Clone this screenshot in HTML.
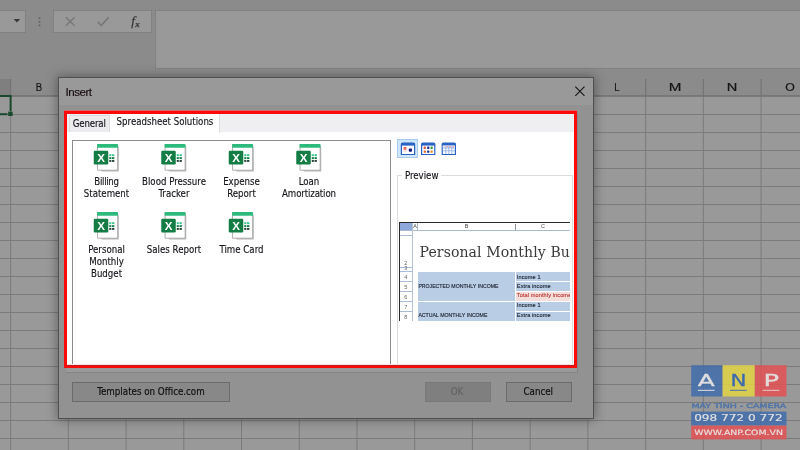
<!DOCTYPE html>
<html lang="en"><head><meta charset="utf-8"><title>Insert</title>
<style>
*{box-sizing:border-box;margin:0;padding:0}
html,body{width:800px;height:450px;overflow:hidden;background:#8b8b8b}
body{position:relative;font-family:'DejaVu Sans Condensed','Liberation Sans',sans-serif;font-size:9.6px;color:#1c1c1c}
#stage{position:absolute;left:-20px;top:-20px;width:840px;height:490px;background:#8b8b8b;filter:blur(0.42px)}
#app{position:absolute;left:20px;top:20px;width:800px;height:450px}
.a{position:absolute}
.t{position:absolute;white-space:nowrap;line-height:12px;text-align:center}
.box{position:absolute;background:#999;border:1px solid #818181}
.hl{position:absolute;font-family:'Liberation Sans','DejaVu Sans',sans-serif;font-size:11.7px;line-height:14px;width:30px;text-align:center;color:#161616;-webkit-text-stroke:.2px #161616;top:80px}
.lbl{position:absolute;width:76px;text-align:center;line-height:12px;font-size:9.6px;color:#16161c;-webkit-text-stroke:.14px #16161c}
.btn{position:absolute;height:20px;top:382px;background:#888;border:1px solid #6a6a6a;text-align:center;line-height:18px;font-size:9.7px;color:#111;-webkit-text-stroke:.18px #111}
svg{position:absolute;overflow:visible}
</style></head>
<body>
<div id="stage"><div id="app">
<div class="box" style="left:-1px;top:10px;width:27px;height:23px"></div>
<div class="box" style="left:53px;top:10px;width:99px;height:23px"></div>
<div class="box" style="left:155px;top:10px;width:647px;height:59px;border-bottom-color:#808080"></div>
<svg class="a" style="left:0;top:0" width="160" height="40" viewBox="0 0 160 40"><path d="M13.6 19h6.6l-3.3 3.6z" fill="#383838"/><g fill="#606060"><rect x="38.7" y="17.2" width="1.6" height="1.6"/><rect x="38.7" y="20.9" width="1.6" height="1.6"/><rect x="38.7" y="24.6" width="1.6" height="1.6"/></g><path d="M65.8 17.2l8.8 8.6M74.6 17.2l-8.8 8.6" stroke="#777" stroke-width="1.35" fill="none"/><path d="M97.8 21.9l3.5 3.7 7.3-8.3" stroke="#777" stroke-width="1.6" fill="none"/></svg>
<div class="t" style="left:131.2px;top:13px;font-family:'Liberation Serif','DejaVu Serif',serif;font-style:italic;font-size:13.5px;line-height:16px;color:#383838;-webkit-text-stroke:.25px #383838;text-align:left">f<span style="font-size:9px;font-weight:bold;position:relative;top:1.6px;margin-left:.2px">x</span></div>
<div class="a" style="left:0;top:96px;width:800px;height:354px;background:#999"></div>
<svg class="a" style="left:0;top:0" width="800" height="450" viewBox="0 0 800 450"><g stroke="#777" stroke-width=".9"><line x1="10.60" y1="96" x2="10.60" y2="450"/><line x1="68.33" y1="96" x2="68.33" y2="450"/><line x1="126.06" y1="96" x2="126.06" y2="450"/><line x1="183.79" y1="96" x2="183.79" y2="450"/><line x1="241.52" y1="96" x2="241.52" y2="450"/><line x1="299.25" y1="96" x2="299.25" y2="450"/><line x1="356.98" y1="96" x2="356.98" y2="450"/><line x1="414.71" y1="96" x2="414.71" y2="450"/><line x1="472.44" y1="96" x2="472.44" y2="450"/><line x1="530.17" y1="96" x2="530.17" y2="450"/><line x1="587.90" y1="96" x2="587.90" y2="450"/><line x1="645.63" y1="96" x2="645.63" y2="450"/><line x1="703.36" y1="96" x2="703.36" y2="450"/><line x1="761.09" y1="96" x2="761.09" y2="450"/><line x1="0" y1="114.5" x2="800" y2="114.5"/><line x1="0" y1="132.5" x2="800" y2="132.5"/><line x1="0" y1="150.5" x2="800" y2="150.5"/><line x1="0" y1="168.5" x2="800" y2="168.5"/><line x1="0" y1="186.5" x2="800" y2="186.5"/><line x1="0" y1="204.5" x2="800" y2="204.5"/><line x1="0" y1="222.5" x2="800" y2="222.5"/><line x1="0" y1="240.5" x2="800" y2="240.5"/><line x1="0" y1="258.5" x2="800" y2="258.5"/><line x1="0" y1="276.5" x2="800" y2="276.5"/><line x1="0" y1="294.5" x2="800" y2="294.5"/><line x1="0" y1="312.5" x2="800" y2="312.5"/><line x1="0" y1="330.5" x2="800" y2="330.5"/><line x1="0" y1="348.5" x2="800" y2="348.5"/><line x1="0" y1="366.5" x2="800" y2="366.5"/><line x1="0" y1="384.5" x2="800" y2="384.5"/><line x1="0" y1="402.5" x2="800" y2="402.5"/><line x1="0" y1="420.5" x2="800" y2="420.5"/><line x1="0" y1="438.5" x2="800" y2="438.5"/></g><rect x="0" y="79" width="10.6" height="17" fill="#7f7f7f"/><g stroke="#747474" stroke-width="1.2"><line x1="10.60" y1="79" x2="10.60" y2="96"/><line x1="68.33" y1="79" x2="68.33" y2="96"/><line x1="126.06" y1="79" x2="126.06" y2="96"/><line x1="183.79" y1="79" x2="183.79" y2="96"/><line x1="241.52" y1="79" x2="241.52" y2="96"/><line x1="299.25" y1="79" x2="299.25" y2="96"/><line x1="356.98" y1="79" x2="356.98" y2="96"/><line x1="414.71" y1="79" x2="414.71" y2="96"/><line x1="472.44" y1="79" x2="472.44" y2="96"/><line x1="530.17" y1="79" x2="530.17" y2="96"/><line x1="587.90" y1="79" x2="587.90" y2="96"/><line x1="645.63" y1="79" x2="645.63" y2="96"/><line x1="703.36" y1="79" x2="703.36" y2="96"/><line x1="761.09" y1="79" x2="761.09" y2="96"/></g><line x1="0" y1="96" x2="800" y2="96" stroke="#707070" stroke-width="1.6"/><g fill="#17492d"><rect x="0" y="95" width="11.6" height="2"/><rect x="9.6" y="96" width="2" height="15"/><rect x="0" y="113.2" width="7.4" height="2"/><rect x="8.2" y="111.6" width="4.4" height="4.4"/></g></svg>
<div class="hl" style="left:24.3px;transform:scaleX(0.82)">B</div>
<div class="hl" style="left:601.8px;transform:scaleX(0.82)">L</div>
<div class="hl" style="left:659.8px;transform:scaleX(1.3)">M</div>
<div class="hl" style="left:717.4px;transform:scaleX(1.25)">N</div>
<div class="hl" style="left:775.2px;transform:scaleX(1.05)">O</div>
<svg class="a" style="left:0;top:0" width="800" height="450" viewBox="0 0 800 450" font-family="DejaVu Sans,Liberation Sans,sans-serif"><g opacity=".84"><rect x="691.2" y="365.2" width="31.4" height="31.3" fill="#3f6cab"/><rect x="722.6" y="365.2" width="32.2" height="31.3" fill="#e4d644"/><rect x="754.8" y="365.2" width="31.7" height="31.3" fill="#e55153"/><rect x="691.2" y="411.6" width="95.3" height="14" fill="#3f6cab"/><rect x="691.2" y="425.6" width="95.3" height="13.8" fill="#e55153"/></g><g stroke-width=".3" stroke-linejoin="round"><text x="706.2" y="386.2" font-size="15.8" text-anchor="middle" fill="#dedede" stroke="#dedede" textLength="17" lengthAdjust="spacingAndGlyphs">A</text><text x="738.4" y="386.2" font-size="15.8" text-anchor="middle" fill="#3c6ab0" stroke="#3c6ab0" textLength="16" lengthAdjust="spacingAndGlyphs">N</text><text x="771.2" y="386.2" font-size="15.8" text-anchor="middle" fill="#e4dcdc" stroke="#e4dcdc" textLength="15.6" lengthAdjust="spacingAndGlyphs">P</text></g><rect x="697.8" y="389.8" width="16.8" height="1.1" fill="#d4d8de"/><rect x="730" y="389.8" width="16.8" height="1.1" fill="#5877a4"/><rect x="762.6" y="389.8" width="16.8" height="1.1" fill="#e6c0c0"/><text x="691.4" y="408" font-size="6.3" fill="#4e74a8" stroke="#4e74a8" stroke-width=".35" textLength="94.8" lengthAdjust="spacingAndGlyphs">MÁY TÍNH - CAMERA</text><g stroke-width=".15"><text x="694.2" y="421.4" font-size="8.1" fill="#e0e0e0" stroke="#e0e0e0" textLength="88.4" lengthAdjust="spacingAndGlyphs">098 772 0 772</text><text x="694.2" y="434.8" font-size="7.3" fill="#eadede" stroke="#eadede" textLength="88.8" lengthAdjust="spacingAndGlyphs">WWW.ANP.COM.VN</text></g></svg>
<div class="a" style="left:58px;top:77px;width:536px;height:342px;background:#929292;border:1px solid #505050;box-shadow:0 0 10px 1px rgba(0,0,0,.34)"></div>
<div class="a" style="left:59px;top:78px;width:534px;height:27px;background:#999"></div>
<div class="t" style="left:65.6px;top:84px;font-family:'Liberation Sans','DejaVu Sans',sans-serif;font-size:11.6px;line-height:15px;letter-spacing:-.5px;color:#170e13;-webkit-text-stroke:.15px #170e13;text-align:left">Insert</div>
<svg class="a" style="left:574px;top:85px" width="12" height="12" viewBox="0 0 12 12"><path d="M1.3 1.6l9.2 9.2M10.5 1.6L1.3 10.8" stroke="#151515" stroke-width="1.1" fill="none"/></svg>
<div class="a" style="left:66px;top:114px;width:512.4px;height:259.4px;background:#858585"></div>
<div class="a" style="left:66px;top:114px;width:511px;height:258px;background:#9a9a9a"></div>
<div class="a" style="left:64px;top:110px;width:513.4px;height:258px;background:#fb0a0a"></div>
<div class="a" style="left:64px;top:110px;width:513.4px;height:1px;background:#d86a6a"></div>
<div class="a" id="in" style="left:67px;top:114px;width:507px;height:251px;background:#fff;overflow:hidden">
<div class="a" style="left:0;top:0;width:507px;height:17.6px;background:#efeff1"></div>
<div class="a" style="left:1.5999999999999943px;top:1.2000000000000028px;width:41.80000000000001px;height:16.4px;background:#ececee;border:1px solid #dcdce0;border-bottom:none"></div>
<div class="a" style="left:43.400000000000006px;top:0;width:110.0px;height:19px;background:#fff;border-right:1px solid #dddde0"></div>
<div class="t" style="left:-4px;top:3.5999999999999943px;width:52.5px;letter-spacing:-.15px;color:#16161c;-webkit-text-stroke:.14px #16161c">General</div>
<div class="t" style="left:40px;top:2px;width:116px;color:#16161c;-webkit-text-stroke:.14px #16161c">Spreadsheet Solutions</div>
<div class="a" style="left:5.400000000000006px;top:25.5px;width:318.20000000000005px;height:240px;background:#fff;border:1px solid #8c8c8c"></div>
<svg class="a" style="left:0;top:0" width="507" height="251" viewBox="67 114 507 251" font-family="Liberation Sans,DejaVu Sans,sans-serif" font-weight="bold"><g transform="translate(93.75,144.00)"><path d="M6 3.2h19v24.2h-16.8l-2.2-2z" fill="#b4b4b4"/><path d="M3.8 0.6h19.1a1 1 0 0 1 1 1v23.6a1 1 0 0 1 -1 1h-19.1z" fill="#fff" stroke="#a6a6a6" stroke-width=".9"/><path d="M3.4 0h19.9a1 1 0 0 1 1 1v2.7h-20.9z" fill="#2cbb7c"/><rect x="15.5" y="10.2" width="2.1" height="1.9" fill="#37c68c"/><rect x="18.3" y="10.2" width="2.3" height="1.9" fill="#37c68c"/><rect x="15.5" y="13.1" width="2.1" height="2" fill="#17814b"/><rect x="18.3" y="13.1" width="2.3" height="2" fill="#17814b"/><rect x="15.5" y="16.1" width="2.1" height="1.7" fill="#0f2f20"/><rect x="18.3" y="16.1" width="2.3" height="1.7" fill="#0f2f20"/><rect x="0" y="6.8" width="14.5" height="13.7" rx="1.2" fill="#137d45"/><text x="7.4" y="18.0" font-size="11.6" text-anchor="middle" fill="#fff">X</text></g><g transform="translate(161.25,144.00)"><path d="M6 3.2h19v24.2h-16.8l-2.2-2z" fill="#b4b4b4"/><path d="M3.8 0.6h19.1a1 1 0 0 1 1 1v23.6a1 1 0 0 1 -1 1h-19.1z" fill="#fff" stroke="#a6a6a6" stroke-width=".9"/><path d="M3.4 0h19.9a1 1 0 0 1 1 1v2.7h-20.9z" fill="#2cbb7c"/><rect x="15.5" y="10.2" width="2.1" height="1.9" fill="#37c68c"/><rect x="18.3" y="10.2" width="2.3" height="1.9" fill="#37c68c"/><rect x="15.5" y="13.1" width="2.1" height="2" fill="#17814b"/><rect x="18.3" y="13.1" width="2.3" height="2" fill="#17814b"/><rect x="15.5" y="16.1" width="2.1" height="1.7" fill="#0f2f20"/><rect x="18.3" y="16.1" width="2.3" height="1.7" fill="#0f2f20"/><rect x="0" y="6.8" width="14.5" height="13.7" rx="1.2" fill="#137d45"/><text x="7.4" y="18.0" font-size="11.6" text-anchor="middle" fill="#fff">X</text></g><g transform="translate(228.75,144.00)"><path d="M6 3.2h19v24.2h-16.8l-2.2-2z" fill="#b4b4b4"/><path d="M3.8 0.6h19.1a1 1 0 0 1 1 1v23.6a1 1 0 0 1 -1 1h-19.1z" fill="#fff" stroke="#a6a6a6" stroke-width=".9"/><path d="M3.4 0h19.9a1 1 0 0 1 1 1v2.7h-20.9z" fill="#2cbb7c"/><rect x="15.5" y="10.2" width="2.1" height="1.9" fill="#37c68c"/><rect x="18.3" y="10.2" width="2.3" height="1.9" fill="#37c68c"/><rect x="15.5" y="13.1" width="2.1" height="2" fill="#17814b"/><rect x="18.3" y="13.1" width="2.3" height="2" fill="#17814b"/><rect x="15.5" y="16.1" width="2.1" height="1.7" fill="#0f2f20"/><rect x="18.3" y="16.1" width="2.3" height="1.7" fill="#0f2f20"/><rect x="0" y="6.8" width="14.5" height="13.7" rx="1.2" fill="#137d45"/><text x="7.4" y="18.0" font-size="11.6" text-anchor="middle" fill="#fff">X</text></g><g transform="translate(296.25,144.00)"><path d="M6 3.2h19v24.2h-16.8l-2.2-2z" fill="#b4b4b4"/><path d="M3.8 0.6h19.1a1 1 0 0 1 1 1v23.6a1 1 0 0 1 -1 1h-19.1z" fill="#fff" stroke="#a6a6a6" stroke-width=".9"/><path d="M3.4 0h19.9a1 1 0 0 1 1 1v2.7h-20.9z" fill="#2cbb7c"/><rect x="15.5" y="10.2" width="2.1" height="1.9" fill="#37c68c"/><rect x="18.3" y="10.2" width="2.3" height="1.9" fill="#37c68c"/><rect x="15.5" y="13.1" width="2.1" height="2" fill="#17814b"/><rect x="18.3" y="13.1" width="2.3" height="2" fill="#17814b"/><rect x="15.5" y="16.1" width="2.1" height="1.7" fill="#0f2f20"/><rect x="18.3" y="16.1" width="2.3" height="1.7" fill="#0f2f20"/><rect x="0" y="6.8" width="14.5" height="13.7" rx="1.2" fill="#137d45"/><text x="7.4" y="18.0" font-size="11.6" text-anchor="middle" fill="#fff">X</text></g><g transform="translate(93.75,212.00)"><path d="M6 3.2h19v24.2h-16.8l-2.2-2z" fill="#b4b4b4"/><path d="M3.8 0.6h19.1a1 1 0 0 1 1 1v23.6a1 1 0 0 1 -1 1h-19.1z" fill="#fff" stroke="#a6a6a6" stroke-width=".9"/><path d="M3.4 0h19.9a1 1 0 0 1 1 1v2.7h-20.9z" fill="#2cbb7c"/><rect x="15.5" y="10.2" width="2.1" height="1.9" fill="#37c68c"/><rect x="18.3" y="10.2" width="2.3" height="1.9" fill="#37c68c"/><rect x="15.5" y="13.1" width="2.1" height="2" fill="#17814b"/><rect x="18.3" y="13.1" width="2.3" height="2" fill="#17814b"/><rect x="15.5" y="16.1" width="2.1" height="1.7" fill="#0f2f20"/><rect x="18.3" y="16.1" width="2.3" height="1.7" fill="#0f2f20"/><rect x="0" y="6.8" width="14.5" height="13.7" rx="1.2" fill="#137d45"/><text x="7.4" y="18.0" font-size="11.6" text-anchor="middle" fill="#fff">X</text></g><g transform="translate(161.25,212.00)"><path d="M6 3.2h19v24.2h-16.8l-2.2-2z" fill="#b4b4b4"/><path d="M3.8 0.6h19.1a1 1 0 0 1 1 1v23.6a1 1 0 0 1 -1 1h-19.1z" fill="#fff" stroke="#a6a6a6" stroke-width=".9"/><path d="M3.4 0h19.9a1 1 0 0 1 1 1v2.7h-20.9z" fill="#2cbb7c"/><rect x="15.5" y="10.2" width="2.1" height="1.9" fill="#37c68c"/><rect x="18.3" y="10.2" width="2.3" height="1.9" fill="#37c68c"/><rect x="15.5" y="13.1" width="2.1" height="2" fill="#17814b"/><rect x="18.3" y="13.1" width="2.3" height="2" fill="#17814b"/><rect x="15.5" y="16.1" width="2.1" height="1.7" fill="#0f2f20"/><rect x="18.3" y="16.1" width="2.3" height="1.7" fill="#0f2f20"/><rect x="0" y="6.8" width="14.5" height="13.7" rx="1.2" fill="#137d45"/><text x="7.4" y="18.0" font-size="11.6" text-anchor="middle" fill="#fff">X</text></g><g transform="translate(228.75,212.00)"><path d="M6 3.2h19v24.2h-16.8l-2.2-2z" fill="#b4b4b4"/><path d="M3.8 0.6h19.1a1 1 0 0 1 1 1v23.6a1 1 0 0 1 -1 1h-19.1z" fill="#fff" stroke="#a6a6a6" stroke-width=".9"/><path d="M3.4 0h19.9a1 1 0 0 1 1 1v2.7h-20.9z" fill="#2cbb7c"/><rect x="15.5" y="10.2" width="2.1" height="1.9" fill="#37c68c"/><rect x="18.3" y="10.2" width="2.3" height="1.9" fill="#37c68c"/><rect x="15.5" y="13.1" width="2.1" height="2" fill="#17814b"/><rect x="18.3" y="13.1" width="2.3" height="2" fill="#17814b"/><rect x="15.5" y="16.1" width="2.1" height="1.7" fill="#0f2f20"/><rect x="18.3" y="16.1" width="2.3" height="1.7" fill="#0f2f20"/><rect x="0" y="6.8" width="14.5" height="13.7" rx="1.2" fill="#137d45"/><text x="7.4" y="18.0" font-size="11.6" text-anchor="middle" fill="#fff">X</text></g></svg>
<div class="lbl" style="left:1.50px;top:62.10px"><span style="letter-spacing:-.3px">Billing</span><br>Statement</div>
<div class="lbl" style="left:69.00px;top:62.10px">Blood Pressure<br>Tracker</div>
<div class="lbl" style="left:136.50px;top:62.10px">Expense<br>Report</div>
<div class="lbl" style="left:204.00px;top:62.10px">Loan<br><span style="letter-spacing:-.12px">Amortization</span></div>
<div class="lbl" style="left:1.50px;top:130.10px">Personal<br>Monthly<br>Budget</div>
<div class="lbl" style="left:69.00px;top:130.10px">Sales Report</div>
<div class="lbl" style="left:136.50px;top:130.10px">Time Card</div>
<div class="a" style="left:330px;top:25px;width:20.6px;height:18.6px;background:#cfe6fb;border:1px solid #a6cdf1"></div>
<svg class="a" style="left:0;top:0" width="507" height="251" viewBox="67 114 507 251"><g transform="translate(400.8,142.4)"><path d="M0 1.6a1.6 1.6 0 0 1 1.6 -1.6h11.2a1.6 1.6 0 0 1 1.6 1.6v11h-14.4z" fill="#2a63c4"/><rect x="1.2" y="3.2" width="12" height="8.4" fill="#fdfdff"/><rect x="2.8" y="4.6" width="2.8" height="2.8" fill="#ee6a52"/><rect x="2.8" y="8.2" width="2.8" height="1" fill="#f5c9b8"/><rect x="8" y="6.2" width="3.2" height="3.2" rx="1" fill="#15127c"/></g><g transform="translate(421,142.4)"><path d="M0 1.6a1.6 1.6 0 0 1 1.6 -1.6h11.2a1.6 1.6 0 0 1 1.6 1.6v11h-14.4z" fill="#2a63c4"/><rect x="1.2" y="3.2" width="12" height="8.4" fill="#fdfdff"/><rect x="2.7" y="4.2" width="2.2" height="2.4" rx=".6" fill="#e25b46"/><rect x="6.1" y="4.2" width="2.2" height="2.4" rx=".6" fill="#1e2f8c"/><rect x="9.5" y="4.2" width="2.2" height="2.4" rx=".6" fill="#3f9f4a"/><rect x="2.7" y="8.0" width="2.2" height="2.4" rx=".6" fill="#e8641e"/><rect x="6.1" y="8.0" width="2.2" height="2.4" rx=".6" fill="#1c2c80"/><rect x="9.5" y="8.0" width="2.2" height="2.4" rx=".6" fill="#e58a1e"/></g><g transform="translate(441.6,142.4)"><path d="M0 1.6a1.6 1.6 0 0 1 1.6 -1.6h11.2a1.6 1.6 0 0 1 1.6 1.6v11h-14.4z" fill="#2a63c4"/><rect x="1.2" y="3.2" width="12" height="8.4" fill="#fdfdff"/><rect x="1.2" y="3.2" width="12" height="2.2" fill="#f3e3ea"/><g stroke="#86aee6" stroke-width=".8"><path d="M1.2 5.6h12M1.2 8.4h12M4.2 3.4v8.2M7.2 3.4v8.2M10.2 3.4v8.2"/></g><g fill="#e58a8a"><rect x="5" y="4" width="1.4" height=".9"/><rect x="8" y="4" width="1.4" height=".9"/><rect x="11" y="4" width="1.4" height=".9"/></g></g></svg>
<div class="a" style="left:330px;top:61px;width:175.6px;height:220px;border:1px solid #dcdcdc"></div>
<div class="t" style="left:335.2px;top:56px;width:39px;background:#fff;color:#16161c;-webkit-text-stroke:.14px #16161c;font-size:9.6px">Preview</div>
<div class="a" id="pv" style="left:332px;top:108px;width:171.20000000000005px;height:98.80000000000001px;background:#fff;overflow:hidden;border-top:1.2px solid #2a2a2a;border-left:1.2px solid #2a2a2a"><div class="a" style="left:0.00px;top:0.00px;width:11.80px;height:7.40px;background:#90a9dd"></div><div class="a" style="left:0.00px;top:7.20px;width:171.00px;height:1.00px;background:#a9b9cf"></div><div class="a" style="left:11.60px;top:0.00px;width:1.00px;height:98.00px;background:#b5c3d8"></div><div class="a" style="left:17.40px;top:0.00px;width:0.80px;height:7.40px;background:#b0b8c4"></div><div class="a" style="left:115.20px;top:1.00px;width:1.00px;height:6.40px;background:#8b919c"></div><div class="a" style="left:0.00px;top:11.60px;width:11.80px;height:1.00px;background:#a9bbd6"></div><div class="a" style="left:0.00px;top:44.40px;width:11.80px;height:1.00px;background:#a9bbd6"></div><div class="a" style="left:0.00px;top:47.80px;width:11.80px;height:1.00px;background:#a9bbd6"></div><div class="a" style="left:0.00px;top:58.20px;width:11.80px;height:1.00px;background:#a9bbd6"></div><div class="a" style="left:0.00px;top:68.20px;width:11.80px;height:1.00px;background:#a9bbd6"></div><div class="a" style="left:0.00px;top:78.20px;width:11.80px;height:1.00px;background:#a9bbd6"></div><div class="a" style="left:0.00px;top:88.20px;width:11.80px;height:1.00px;background:#a9bbd6"></div><div class="a" style="left:17.80px;top:49.00px;width:97.40px;height:29.20px;background:#b9cde5"></div><div class="a" style="left:17.80px;top:79.20px;width:97.40px;height:19.00px;background:#b9cde5"></div><div class="a" style="left:116.40px;top:49.00px;width:54.00px;height:8.70px;background:#b9cde5"></div><div class="a" style="left:116.40px;top:59.00px;width:54.00px;height:8.70px;background:#b9cde5"></div><div class="a" style="left:116.40px;top:69.00px;width:54.00px;height:8.70px;background:#f3dedc"></div><div class="a" style="left:116.40px;top:79.20px;width:54.00px;height:8.70px;background:#b9cde5"></div><div class="a" style="left:116.40px;top:89.20px;width:54.00px;height:8.70px;background:#b9cde5"></div><div class="t" style="left:19.60px;top:22.00px;font-family:'DejaVu Serif Condensed','Liberation Serif',serif;font-size:15.6px;line-height:15.6px;color:#3a3a3a;text-align:left;letter-spacing:0.1px">Personal Monthly Budget</div><div class="t" style="left:13.20px;top:1.00px;font-family:'Liberation Sans','DejaVu Sans',sans-serif;font-size:5.4px;line-height:5.4px;color:#444;text-align:left;">A</div><div class="t" style="left:64.80px;top:1.00px;font-family:'Liberation Sans','DejaVu Sans',sans-serif;font-size:5.4px;line-height:5.4px;color:#444;text-align:left;">B</div><div class="t" style="left:141.00px;top:1.00px;font-family:'Liberation Sans','DejaVu Sans',sans-serif;font-size:5.4px;line-height:5.4px;color:#444;text-align:left;">C</div><div class="t" style="left:4.20px;top:38.40px;font-family:'Liberation Sans','DejaVu Sans',sans-serif;font-size:5.6px;line-height:5.6px;color:#666;text-align:left;">2</div><div class="t" style="left:4.20px;top:43.40px;font-family:'Liberation Sans','DejaVu Sans',sans-serif;font-size:5.6px;line-height:5.6px;color:#666;text-align:left;">3</div><div class="t" style="left:4.20px;top:52.00px;font-family:'Liberation Sans','DejaVu Sans',sans-serif;font-size:5.6px;line-height:5.6px;color:#666;text-align:left;">4</div><div class="t" style="left:4.20px;top:62.00px;font-family:'Liberation Sans','DejaVu Sans',sans-serif;font-size:5.6px;line-height:5.6px;color:#666;text-align:left;">5</div><div class="t" style="left:4.20px;top:72.00px;font-family:'Liberation Sans','DejaVu Sans',sans-serif;font-size:5.6px;line-height:5.6px;color:#666;text-align:left;">6</div><div class="t" style="left:4.20px;top:82.00px;font-family:'Liberation Sans','DejaVu Sans',sans-serif;font-size:5.6px;line-height:5.6px;color:#666;text-align:left;">7</div><div class="t" style="left:4.20px;top:92.00px;font-family:'Liberation Sans','DejaVu Sans',sans-serif;font-size:5.6px;line-height:5.6px;color:#666;text-align:left;">8</div><div class="t" style="left:18.40px;top:60.60px;font-family:'Liberation Sans','DejaVu Sans',sans-serif;font-size:5.2px;line-height:5.2px;color:#1d2430;text-align:left;letter-spacing:-.02px;word-spacing:.3px;-webkit-text-stroke:.14px #1d2430">PROJECTED MONTHLY INCOME</div><div class="t" style="left:18.40px;top:90.00px;font-family:'Liberation Sans','DejaVu Sans',sans-serif;font-size:5.2px;line-height:5.2px;color:#1d2430;text-align:left;letter-spacing:-.02px;word-spacing:.3px;-webkit-text-stroke:.14px #1d2430">ACTUAL MONTHLY INCOME</div><div class="t" style="left:116.80px;top:51.60px;font-family:'Liberation Sans','DejaVu Sans',sans-serif;font-size:5.6px;line-height:5.6px;color:#1d2430;text-align:left;letter-spacing:.1px;-webkit-text-stroke:.14px #1d2430">Income 1</div><div class="t" style="left:116.80px;top:60.80px;font-family:'Liberation Sans','DejaVu Sans',sans-serif;font-size:5.6px;line-height:5.6px;color:#1d2430;text-align:left;letter-spacing:.1px;-webkit-text-stroke:.14px #1d2430">Extra income</div><div class="t" style="left:116.80px;top:70.40px;font-family:'Liberation Sans','DejaVu Sans',sans-serif;font-size:5.6px;line-height:5.6px;color:#c03a33;text-align:left;letter-spacing:.1px;-webkit-text-stroke:.14px #c03a33">Total monthly income</div><div class="t" style="left:116.80px;top:80.00px;font-family:'Liberation Sans','DejaVu Sans',sans-serif;font-size:5.6px;line-height:5.6px;color:#1d2430;text-align:left;letter-spacing:.1px;-webkit-text-stroke:.14px #1d2430">Income 1</div><div class="t" style="left:116.80px;top:90.00px;font-family:'Liberation Sans','DejaVu Sans',sans-serif;font-size:5.6px;line-height:5.6px;color:#1d2430;text-align:left;letter-spacing:.1px;-webkit-text-stroke:.14px #1d2430">Extra income</div></div>
</div>
<div class="a" style="left:67px;top:364px;width:507px;height:2px;background:linear-gradient(#fff 0,#f6dcdc 30%,#b81c1c 62%,#d41414)"></div>
<div class="btn" style="left:72px;width:158px">Templates on Office.com</div>
<div class="btn" style="left:425px;width:66px;padding-right:2px;background:#7f7f7f;border-color:#797979;color:#626262;-webkit-text-stroke:.1px #626262">OK</div>
<div class="btn" style="left:506px;width:66px;padding-right:1.5px">Cancel</div>
</div></div>
</body></html>
